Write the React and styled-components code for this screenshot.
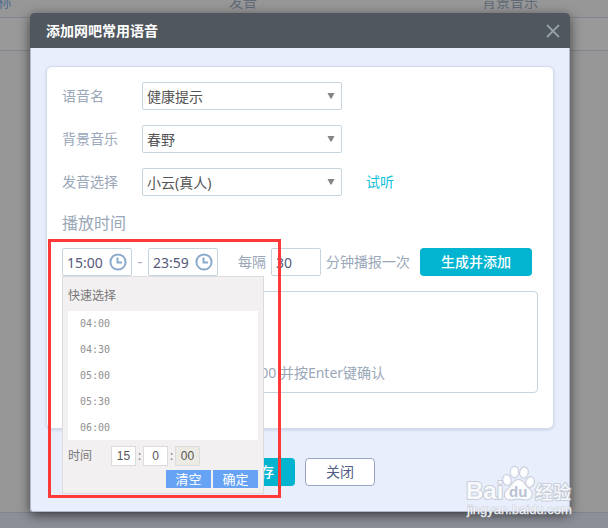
import React, { useState } from "react";
import styled, { createGlobalStyle } from "styled-components";

const sans = `"Noto Sans", "Noto Sans CJK SC", sans-serif`;

const GlobalStyle = createGlobalStyle`
  *, *::before, *::after { box-sizing: border-box; }
  html, body, #root { height: 100%; }
  body { margin: 0; overflow: hidden; font: 14px/20px ${sans}; }
  button, input, select { font: inherit; margin: 0; }
`;

const Screen = styled.div`
  position: relative;
  height: 100%;
  overflow: hidden;
`;

const Backdrop = styled.div`
  display: flex;
  flex-direction: column;
  height: 100%;
  background: #979797;
`;

const BackTable = styled.table`
  table-layout: fixed;
  width: calc(100% + 171px);
  margin: -11px 0 0 -125px;
  border-collapse: collapse;
  color: #606a76;

  th {
    height: 28px;
    padding: 0 0 2px;
    font-weight: 400;
    border-bottom: 1px solid #83858f;
  }
  th:first-child { width: 245px; color: #4f6f92; }
  th:nth-child(2) { width: 246px; }
  td {
    height: 33px;
    background: #999;
    border-bottom: 1px solid #83858f;
  }
`;

const BackFooter = styled.div`
  height: 16px;
  margin-top: auto;
  background: #8c8f98;
  border-top: 1px solid #81858e;
`;

const Overlay = styled.div`
  position: absolute;
  inset: 0;
  padding: 13px 38px 16px 30px;
`;

const Dialog = styled.section`
  background: #e8eefb;
  border-radius: 4px;
  box-shadow: 0 3px 12px rgba(0, 0, 0, 0.6);
`;

const DialogHeader = styled.header`
  display: flex;
  align-items: center;
  justify-content: space-between;
  height: 35px;
  padding: 0 10px 0 16px;
  background: #50575e;
  border-radius: 4px 4px 0 0;
  color: #fff;
`;

const DialogTitle = styled.h1`
  margin: 0;
  font-size: 14px;
  line-height: 20px;
  font-weight: 700;
`;

const IconButton = styled.button`
  display: flex;
  padding: 0;
  border: 0;
  background: none;
  color: ${(p) => p.$color};
  cursor: pointer;
`;

const DialogBody = styled.div`
  padding: 18px 15px 25px;
  border: solid #b4bacb;
  border-width: 0 1px 1px;
  border-radius: 0 0 4px 4px;
`;

const Panel = styled.div`
  padding: 15px 15px 35px;
  background: #fff;
  border: 1px solid #d3dbea;
  border-radius: 6px;
  box-shadow: 0 1px 3px rgba(150, 165, 200, 0.4);
`;

const FormRow = styled.div`
  display: flex;
  align-items: center;
  height: 28px;
  margin-bottom: 15px;
`;

const FieldLabel = styled.label`
  width: 80px;
  color: #99a7b8;
`;

const SelectBox = styled.span`
  display: grid;
  align-items: center;
  width: 200px;

  > * { grid-area: 1 / 1; }
  > svg { justify-self: end; margin-right: 7px; pointer-events: none; }
`;

const Select = styled.select`
  appearance: none;
  width: 100%;
  height: 28px;
  padding: 1px 20px 0 4px;
  border: 1px solid #c5d6df;
  border-radius: 2px;
  background: #fff;
  color: #555;
`;

const TextLink = styled.a`
  margin-left: 24px;
  color: #12c2dc;
  text-decoration: none;
`;

const SectionTitle = styled.h2`
  margin: 0 0 13px;
  font-size: 16px;
  line-height: 24px;
  font-weight: 400;
  color: #99a7b8;
`;

const TimeRow = styled.div`
  position: relative;
  display: flex;
  align-items: center;
  margin-bottom: 15px;
  color: #99a7b8;
`;

const TimeField = styled.div`
  display: flex;
  align-items: center;
  justify-content: space-between;
  width: 70px;
  height: 28px;
  padding: 0 4px;
  border: 1px solid #c5d6df;
  border-radius: 2px;
  background: #fff;
`;

const TimeInput = styled.input`
  width: 40px;
  padding: 1px 0 0;
  border: 0;
  background: none;
  color: #55597a;
`;

const Dash = styled.span`
  width: 16px;
  text-align: center;
`;

const EveryLabel = styled.label`
  margin-left: 20px;
`;

const IntervalInput = styled.input`
  width: 50px;
  height: 28px;
  margin: 0 5px;
  padding: 1px 4px 0;
  border: 1px solid #c5d6df;
  border-radius: 2px;
  color: #55597a;
`;

const Button = styled.button`
  width: ${(p) => p.$width};
  height: 28px;
  padding: 0;
  border: ${(p) => (p.$plain ? "1px solid #9aa4c4" : "0")};
  border-radius: 4px;
  background: ${(p) => (p.$plain ? "#fff" : "#02b4d0")};
  color: ${(p) => (p.$plain ? "#525d84" : "#fff")};
  font-weight: ${(p) => (p.$plain ? 400 : 500)};
  cursor: pointer;
`;

const AddButton = styled(Button)`
  margin-left: 10px;
`;

const TagBox = styled.div`
  display: flex;
  align-items: flex-end;
  height: 102px;
  padding: 0 0 9px 8px;
  border: 1px solid #c5d6df;
  border-radius: 4px;
`;

const TagInput = styled.input`
  width: 100%;
  height: 22px;
  padding: 0;
  border: 0;
  background: none;
  text-align: center;
  &::placeholder { color: #99a7b8; opacity: 1; }
`;

const DialogFooter = styled.footer`
  display: flex;
  justify-content: center;
  gap: 10px;
  margin-top: 29px;
`;

const Picker = styled.div`
  position: absolute;
  z-index: 1;
  top: 28px;
  left: 0;
  width: 202px;
  padding: 7px 5px 5px;
  border: 1px solid #dcdcdc;
  background: #f2f0f1;
  color: #777;
  font-size: 12px;
`;

const PickerTitle = styled.div`
  height: 27px;
  padding: 2px 0 0;
  line-height: 20px;
`;

const TimeList = styled.div`
  display: flex;
  flex-direction: column;
  height: 129px;
  overflow: hidden;
  background: #fff;
`;

const TimeOption = styled.button`
  flex: none;
  height: 26px;
  padding: 0 12px;
  border: 0;
  background: none;
  color: #909090;
  font: 10px/24px "DejaVu Sans Mono", monospace;
  text-align: left;
  cursor: pointer;
`;

const PickerClock = styled.div`
  display: flex;
  align-items: center;
  height: 20px;
  margin: 6px 0 4px;

  > label { width: 43px; }
`;

const ClockInput = styled.input`
  width: 25px;
  height: 20px;
  padding: 0;
  border: 1px solid #dcdcdc;
  background: ${(p) => (p.readOnly ? "#ebebe4" : "#fff")};
  color: #555;
  font: 12px/18px "Liberation Sans", sans-serif;
  text-align: center;
`;

const Colon = styled.span`
  width: 7px;
  text-align: center;
`;

const PickerActions = styled.div`
  display: flex;
  justify-content: flex-end;
  gap: 2px;
`;

const PickerButton = styled.button`
  width: 45px;
  height: 18px;
  padding: 0;
  border: 0;
  background: #66a3f5;
  color: #fff;
  font-size: 13px;
  line-height: 18px;
  cursor: pointer;
`;

const Highlight = styled.div`
  position: absolute;
  z-index: 2;
  top: -9px;
  left: -14px;
  width: 233px;
  height: 259px;
  border: 3px solid #ff3838;
  pointer-events: none;
`;

const Watermark = styled.svg`
  position: absolute;
  right: 32px;
  bottom: 9px;
  pointer-events: none;
`;

const Arrow = () => (
  <svg width="8" height="6" viewBox="0 0 8 6" aria-hidden="true">
    <path d="M0.5 0H7.5L4.6 5.5H3.4Z" fill="#858585" />
  </svg>
);

const Clock = () => (
  <svg width="18" height="18" viewBox="0 0 18 18" fill="none" stroke="#8aabcc" aria-hidden="true">
    <circle cx="9" cy="9" r="7.6" strokeWidth="2" />
    <path d="M8.5 4.5V9.500H13" strokeWidth="2" />
  </svg>
);

const fields = [
  { id: "voice-name", label: "语音名", value: "健康提示" },
  { id: "music", label: "背景音乐", value: "春野" },
  { id: "speaker", label: "发音选择", value: "小云(真人)", link: "试听" },
];

const quickTimes = ["04:00", "04:30", "05:00", "05:30", "06:00"];

function TimeBox({ label, value, onChange }) {
  return (
    <TimeField>
      <TimeInput aria-label={label} value={value} onChange={(e) => onChange(e.target.value)} />
      <IconButton type="button" $color="#8aabcc" aria-label="选择时间">
        <Clock />
      </IconButton>
    </TimeField>
  );
}

function TimePicker({ onPick }) {
  return (
    <Picker>
      <PickerTitle>快速选择</PickerTitle>
      <TimeList>
        {quickTimes.map((t) => (
          <TimeOption key={t} type="button" onClick={() => onPick(t)}>{t}</TimeOption>
        ))}
      </TimeList>
      <PickerClock>
        <label htmlFor="hour">时间</label>
        <ClockInput id="hour" defaultValue="15" />
        <Colon>:</Colon>
        <ClockInput aria-label="分" defaultValue="0" />
        <Colon>:</Colon>
        <ClockInput aria-label="秒" value="00" readOnly />
      </PickerClock>
      <PickerActions>
        <PickerButton type="button">清空</PickerButton>
        <PickerButton type="button">确定</PickerButton>
      </PickerActions>
    </Picker>
  );
}

function BaiduMark() {
  return (
    <Watermark width="110" height="58" viewBox="0 0 110 58" aria-label="Baidu经验">
      <g fill="#fff" fillOpacity="0.85" stroke="#b9bfcc" strokeOpacity="0.7" strokeWidth="2" paintOrder="stroke" strokeLinejoin="round">
        <ellipse cx="41" cy="19" rx="3.8" ry="5" transform="rotate(-12 41 19)" />
        <ellipse cx="48.5" cy="11" rx="3.8" ry="5.2" />
        <ellipse cx="58" cy="11.5" rx="3.8" ry="5.2" transform="rotate(10 58 11.5)" />
        <ellipse cx="64" cy="21" rx="3.8" ry="5" transform="rotate(22 64 21)" />
        <path d="M52.5 19C58 19 59 25 63 28C67 31 67 38 60 38.500C57 38.700 55 37.500 52.500 37.500S47 38.700 44 38.500C37 38 38 31 42 28C46 25 47 19 52.500 19Z" />
        <text x="0" y="38" fontFamily="Liberation Sans, sans-serif" fontWeight="700" fontSize="24">Bai</text>
        <text x="69" y="38" fontFamily="Noto Sans CJK SC, sans-serif" fontWeight="500" fontSize="18">经验</text>
        <text x="1" y="53" fontFamily="Liberation Sans, sans-serif" fontSize="13" strokeWidth="1">jingyan.baidu.com</text>
      </g>
      <text x="43" y="36" fill="#b9c2d4" fontFamily="Liberation Sans, sans-serif" fontWeight="700" fontSize="15">du</text>
    </Watermark>
  );
}

export default function App() {
  const [start, setStart] = useState("15:00");
  const [end, setEnd] = useState("23:59");

  return (
    <Screen>
      <GlobalStyle />
      <Backdrop>
        <BackTable>
          <thead>
            <tr><th>名称</th><th>发音</th><th>背景音乐</th></tr>
          </thead>
          <tbody>
            <tr><td /><td /><td /></tr>
          </tbody>
        </BackTable>
        <BackFooter />
      </Backdrop>
      <Overlay>
        <Dialog role="dialog" aria-labelledby="dialog-title">
          <DialogHeader>
            <DialogTitle id="dialog-title">添加网吧常用语音</DialogTitle>
            <IconButton type="button" $color="#93a0aa" aria-label="关闭窗口">
              <svg width="14" height="14" viewBox="0 0 14 14" stroke="currentColor" strokeWidth="1.8" aria-hidden="true">
                <path d="M1 1L13 13M13 1L1 13" />
              </svg>
            </IconButton>
          </DialogHeader>
          <DialogBody>
            <Panel>
              {fields.map((f) => (
                <FormRow key={f.id}>
                  <FieldLabel htmlFor={f.id}>{f.label}</FieldLabel>
                  <SelectBox>
                    <Select id={f.id} defaultValue={f.value}>
                      <option>{f.value}</option>
                    </Select>
                    <Arrow />
                  </SelectBox>
                  {f.link && <TextLink href="#listen">{f.link}</TextLink>}
                </FormRow>
              ))}
              <SectionTitle>播放时间</SectionTitle>
              <TimeRow>
                <TimeBox label="开始时间" value={start} onChange={setStart} />
                <Dash>-</Dash>
                <TimeBox label="结束时间" value={end} onChange={setEnd} />
                <EveryLabel htmlFor="interval">每隔</EveryLabel>
                <IntervalInput id="interval" defaultValue="30" />
                <span>分钟播报一次</span>
                <AddButton type="button" $width="112px">生成并添加</AddButton>
                <TimePicker onPick={setStart} />
                <Highlight />
              </TimeRow>
              <TagBox>
                <TagInput aria-label="添加播放时间" placeholder="如 12:00 并按Enter键确认" />
              </TagBox>
            </Panel>
            <DialogFooter>
              <Button type="button" $width="70px">保存</Button>
              <Button type="button" $width="70px" $plain>关闭</Button>
            </DialogFooter>
          </DialogBody>
        </Dialog>
      </Overlay>
      <BaiduMark />
    </Screen>
  );
}
